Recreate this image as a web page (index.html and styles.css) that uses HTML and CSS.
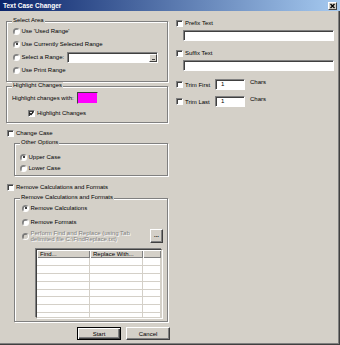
FILE: index.html
```html
<!DOCTYPE html>
<html lang="en">

<head>
  <meta charset="UTF-8" />
  <meta name="viewport" content="width=device-width, initial-scale=1.0" />
  <title>Text Case Changer</title>
  <link rel="stylesheet" href="styles.css">
</head>

<body>
  <div class="window">
    <div class="titlebar">
      <span class="title">Text Case Changer</span>
      <span class="close-btn">
        <svg width="7" height="6" viewBox="0 0 7 6"><path d="M1.5 1 L5.5 5 M5.5 1 L1.5 5" stroke="#000" stroke-width="1.3" /></svg>
      </span>
    </div>

    <div class="main">
      <div class="left-col">
        <div class="group area-group">
          <span class="group-title">Select Area</span>
          <div class="opt"><span class="radio"></span>Use 'Used Range'</div>
          <div class="opt"><span class="radio checked"></span>Use Currently Selected Range</div>
          <div class="opt">
            <span class="radio"></span>Select a Range:
            <span class="range-field"><span class="range-btn"><span class="range-icon"></span></span></span>
          </div>
          <div class="opt"><span class="radio"></span>Use Print Range</div>
        </div>

        <div class="group highlight-group">
          <span class="group-title">Highlight Changes</span>
          <div class="color-row">Highlight changes with: <span class="swatch"></span></div>
          <div class="check-row highlight-check">
            <span class="check checked"><svg width="5" height="5" viewBox="0 0 5 5"><polyline points="0.7,2.2 2,3.6 4.3,0.9" fill="none" stroke="#000" stroke-width="1.2" /></svg></span>
            Highlight Changes
          </div>
        </div>

        <div class="check-row section-check case-check"><span class="check"></span>Change Case</div>
        <div class="group sub-group options-group">
          <span class="group-title">Other Options</span>
          <div class="opt small"><span class="radio checked"></span>Upper Case</div>
          <div class="opt small"><span class="radio"></span>Lower Case</div>
        </div>

        <div class="check-row section-check calc-check"><span class="check"></span>Remove Calculations and Formats</div>
        <div class="group sub-group calc-group">
          <span class="group-title">Remove Calculations and Formats</span>
          <div class="opt"><span class="radio checked"></span>Remove Calculations</div>
          <div class="opt formats-opt"><span class="radio"></span>Remove Formats</div>
          <div class="replace-row">
            <span class="radio disabled"></span>
            <span class="disabled-text">Perform Find and Replace (using Tab<br>delimited file C:\FindReplace.txt)</span>
            <span class="dots-btn">...</span>
          </div>
          <div class="list">
            <div class="list-head">
              <span>Find...</span>
              <span>Replace With...</span>
              <span></span>
            </div>
            <div class="list-row"><span></span><span></span><span></span></div>
            <div class="list-row"><span></span><span></span><span></span></div>
            <div class="list-row"><span></span><span></span><span></span></div>
            <div class="list-row"><span></span><span></span><span></span></div>
            <div class="list-row"><span></span><span></span><span></span></div>
            <div class="list-row"><span></span><span></span><span></span></div>
            <div class="list-row"><span></span><span></span><span></span></div>
            <div class="list-row"><span></span><span></span><span></span></div>
          </div>
        </div>
      </div>

      <div class="right-col">
        <div class="check-row"><span class="check"></span>Prefix Text</div>
        <div class="text-field wide"></div>
        <div class="check-row suffix-row"><span class="check"></span>Suffix Text</div>
        <div class="text-field wide"></div>
        <div class="trim-row">
          <span class="check"></span><span class="trim-label">Trim First</span>
          <span class="text-field short">1</span>
          <span class="chars">Chars</span>
        </div>
        <div class="trim-row last">
          <span class="check"></span><span class="trim-label">Trim Last</span>
          <span class="text-field short">1</span>
          <span class="chars">Chars</span>
        </div>
      </div>
    </div>

    <div class="footer">
      <button class="btn default">Start</button>
      <button class="btn">Cancel</button>
    </div>
  </div>
</body>

</html>
```

FILE: styles.css
```css
* {
  box-sizing: border-box;
}

body {
  margin: 0;
  font-family: "Liberation Sans", Arial, sans-serif;
  font-size: 6px;
  color: #000;
  background-color: #d4d0c8;
}

.window {
  width: 340px;
  height: 345px;
  background-color: #d4d0c8;
  display: flex;
  flex-direction: column;
  box-shadow: inset -1px -1px 0 #404040, inset -2px -2px 0 #808080;
}

/* title bar */
.titlebar {
  height: 11px;
  flex: none;
  display: flex;
  align-items: center;
  justify-content: space-between;
  padding: 0 3px;
  background: linear-gradient(to right, #0a246a, #a6caf0);
}

.title {
  color: #fff;
  font-weight: bold;
  font-size: 6.5px;
}

.close-btn {
  width: 9px;
  height: 8px;
  display: flex;
  align-items: center;
  justify-content: center;
  background-color: #d4d0c8;
  border: 1px solid;
  border-color: #fff #404040 #404040 #fff;
}

.main {
  display: flex;
  flex: none;
}

.left-col {
  width: 162px;
  margin-left: 6px;
}

.right-col {
  width: 160px;
  margin-left: 7px;
  padding-top: 6px;
}

/* group boxes */
.group {
  position: relative;
  border: 1px solid #808080;
  box-shadow: inset 1px 1px 0 #fff, 1px 1px 0 #fff;
}

.group-title {
  position: absolute;
  top: -5px;
  left: 5px;
  padding: 0 1px;
  line-height: 7px;
  background-color: #d4d0c8;
}

.area-group {
  margin-top: 10px;
  height: 61px;
  padding: 2.5px 0 0 6px;
}

.highlight-group {
  margin-top: 4px;
  height: 37px;
  padding: 5px 0 0 5px;
}

.sub-group {
  margin-left: 8px;
  width: 154px;
}

.options-group {
  margin-top: 4px;
  height: 33px;
  padding: 7.5px 0 0 5px;
}

.calc-group {
  margin-top: 5px;
  height: 124px;
  padding: 3px 4px 0 7px;
}

/* rows */
.opt {
  height: 13px;
  display: flex;
  align-items: center;
}

.opt.small {
  height: 11px;
}

.calc-group .opt {
  height: 12px;
}

.formats-opt {
  margin-top: 2px;
}

.check-row {
  height: 12px;
  display: flex;
  align-items: center;
  padding-left: 1px;
}

.section-check {
  margin-top: 4px;
}

.calc-check {
  margin-top: 5px;
}

.suffix-row {
  margin-top: 6px;
}

.highlight-check {
  height: 14px;
  margin-top: 2px;
  padding-left: 16px;
}

.color-row {
  height: 12px;
  display: flex;
  align-items: center;
}

.swatch {
  width: 21px;
  height: 12px;
  margin-left: 3px;
  background-color: #ff00ff;
  border: 1px solid;
  border-color: #404040 #d4d0c8 #d4d0c8 #404040;
}

/* radios and checkboxes */
.radio {
  position: relative;
  width: 7px;
  height: 7px;
  flex: none;
  margin-right: 1.5px;
  border-radius: 50%;
  background-color: #fff;
  border: 1px solid;
  border-color: #808080 #fff #fff #808080;
  box-shadow: inset 0.5px 0.5px 0 #404040;
}

.radio.checked::after {
  content: "";
  position: absolute;
  left: 1.5px;
  top: 1.5px;
  width: 2px;
  height: 2px;
  border-radius: 50%;
  background-color: #000;
}

.radio.disabled {
  background-color: #d4d0c8;
}

.check {
  width: 7px;
  height: 7px;
  flex: none;
  margin-right: 2px;
  background-color: #fff;
  border: 1px solid;
  border-color: #808080 #fff #fff #808080;
  box-shadow: inset 1px 1px 0 #404040;
}

.check svg {
  display: block;
}

/* inputs */
.range-field {
  position: relative;
  width: 91px;
  height: 11px;
  margin-left: 3px;
  background-color: #fff;
  border: 1px solid;
  border-color: #808080 #fff #fff #808080;
  box-shadow: inset 1px 1px 0 #404040;
}

.range-btn {
  position: absolute;
  right: 0;
  top: 1px;
  width: 8px;
  height: 8px;
  background-color: #d4d0c8;
  border: 1px solid;
  border-color: #fff #404040 #404040 #fff;
}

.range-icon {
  position: absolute;
  left: 1.5px;
  bottom: 1px;
  width: 3px;
  height: 1px;
  background-color: #404040;
}

.text-field {
  display: block;
  height: 11px;
  background-color: #fff;
  border: 1px solid;
  border-color: #808080 #fff #fff #808080;
  box-shadow: inset 1px 1px 0 #404040;
}

.text-field.wide {
  width: 151px;
  margin: 1px 0 0 8px;
}

.text-field.short {
  width: 30px;
  padding-left: 5px;
  line-height: 9px;
}

.trim-row {
  height: 11px;
  display: flex;
  align-items: center;
  margin-top: 8px;
  padding-left: 1px;
}

.trim-row.last {
  margin-top: 6px;
}

.trim-label {
  width: 30px;
}

.chars {
  align-self: flex-start;
  margin-left: 5px;
  line-height: 7px;
}

/* find and replace */
.replace-row {
  height: 14px;
  margin-top: 1px;
  display: flex;
  align-items: center;
}

.disabled-text {
  flex: 1;
  line-height: 6.5px;
  color: #808080;
  text-shadow: 1px 1px 0 #fff;
}

.dots-btn {
  width: 13px;
  height: 14px;
  flex: none;
  text-align: center;
  line-height: 10px;
  font-weight: bold;
  background-color: #d4d0c8;
  border: 1px solid;
  border-color: #fff #404040 #404040 #fff;
  box-shadow: inset -1px -1px 0 #808080;
}

.list {
  width: 126px;
  height: 69px;
  margin: 6px 0 0 14px;
  overflow: hidden;
  background-color: #fff;
  border: 1px solid;
  border-color: #404040 #d4d0c8 #d4d0c8 #404040;
  box-shadow: -1px -1px 0 #808080, 1px 1px 0 #fff;
}

.list-head,
.list-row {
  display: grid;
  grid-template-columns: 53px 53px 1fr;
}

.list-head span {
  height: 8px;
  line-height: 8px;
  padding-left: 3px;
  background-color: #d4d0c8;
  box-shadow: inset 1px 1px 0 #fff, inset -1px -1px 0 #808080;
}

.list-row span {
  height: 7.9px;
  border-right: 1px solid #d4d0c8;
  border-bottom: 1px solid #d4d0c8;
}

/* buttons */
.footer {
  display: flex;
  gap: 5px;
  margin-top: 5px;
  padding-left: 77px;
}

.btn {
  width: 44px;
  height: 13px;
  padding: 0;
  font: inherit;
  color: #000;
  background-color: #d4d0c8;
  border: 1px solid;
  border-color: #fff #404040 #404040 #fff;
  box-shadow: inset -1px -1px 0 #808080;
}

.btn.default {
  border: 1px solid #000;
  box-shadow: inset 1px 1px 0 #fff, inset -1px -1px 0 #404040, inset -2px -2px 0 #808080;
}
```
